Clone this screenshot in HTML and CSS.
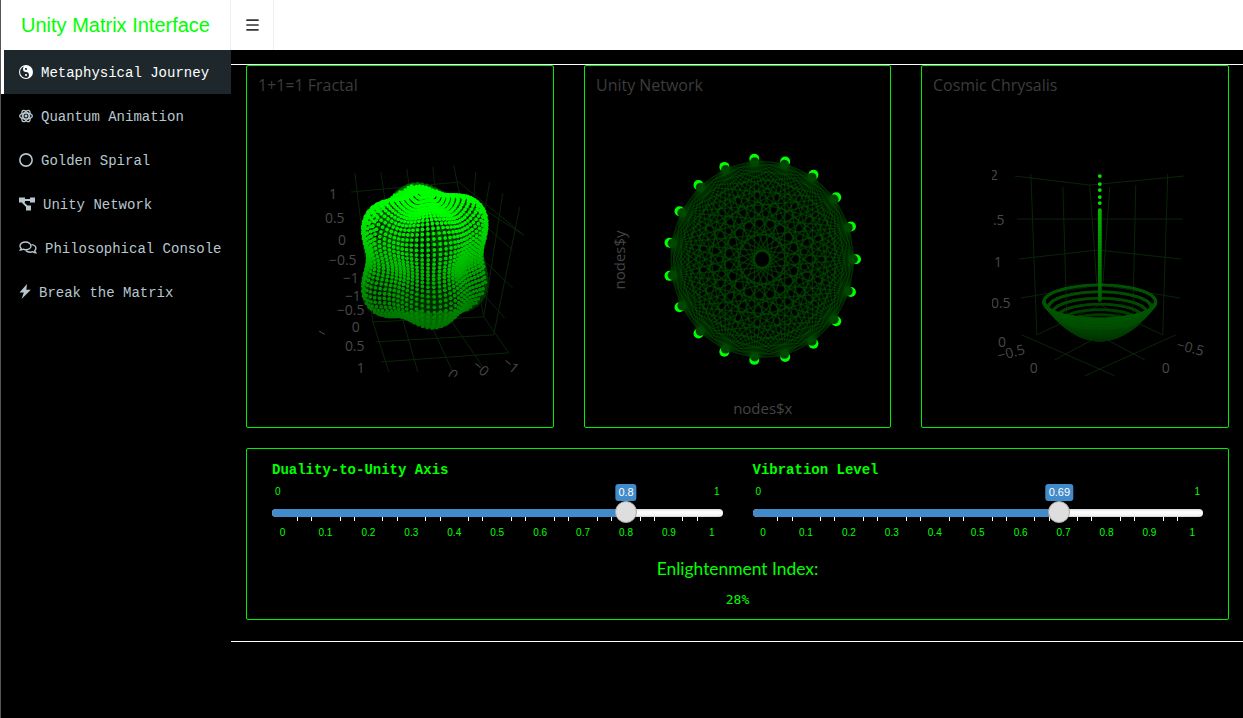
FILE: index.html
```html
<!DOCTYPE html>
<html lang="en">
<head>
<meta charset="utf-8">
<title>Unity Matrix Interface</title>
<link rel="stylesheet" href="styles.css">
</head>
<body>
<header class="topbar">
  <div class="logo">Unity Matrix Interface</div>
  <button class="toggle" aria-label="Toggle navigation">
    <svg width="13" height="12" viewBox="0 0 13 12"><path d="M1 1.2h11M1 6h11M1 10.8h11" class="bars"/></svg>
  </button>
</header>
<div class="layout">
  <nav class="sidebar">
    <a class="item active">
      <svg class="ic w14" viewBox="0 0 16 16"><circle cx="8" cy="8" r="8" fill="#fff"/><path d="M8 1.2A6.8 6.8 0 0 0 8 14.8 3.4 3.4 0 0 0 8 8 3.4 3.4 0 0 1 8 1.2z" fill="#1e282c"/><circle cx="8" cy="4.6" r="1.2" fill="#1e282c"/><circle cx="8" cy="11.4" r="1.2" fill="#fff"/></svg>
      <span>Metaphysical Journey</span>
    </a>
    <a class="item">
      <svg class="ic w14" viewBox="0 0 16 16"><g class="line atom"><ellipse cx="8" cy="8" rx="7.2" ry="3.4"/><ellipse cx="8" cy="8" rx="7.2" ry="3.4" transform="rotate(60 8 8)"/><ellipse cx="8" cy="8" rx="7.2" ry="3.4" transform="rotate(120 8 8)"/></g><circle cx="8" cy="8" r="1.7" class="solid"/></svg>
      <span>Quantum Animation</span>
    </a>
    <a class="item">
      <svg class="ic w14" viewBox="0 0 16 16"><circle cx="8" cy="8" r="7" class="line thick"/></svg>
      <span>Golden Spiral</span>
    </a>
    <a class="item">
      <svg class="ic w16" viewBox="0 0 16 14"><path class="solid" d="M0 0.5h6v5H0zM11 0.5h5v5h-5zM7 8.5h5v5H7z"/><path class="line thick" d="M5 3h7M3.5 5l5 5"/></svg>
      <span>Unity Network</span>
    </a>
    <a class="item">
      <svg class="ic w18" viewBox="0 0 18 14"><g class="line thin"><path d="M6.5 1C3.4 1 1 2.8 1 5c0 1 .5 1.8 1.2 2.5-.3.8-.9 1.4-1 1.6 1 0 2-.4 2.7-.9.8.3 1.7.5 2.6.5 3.1 0 5.5-1.7 5.5-3.7S9.6 1 6.5 1z"/><path d="M12.5 3.6c2.5.3 4.4 1.8 4.4 3.7 0 1-.5 1.8-1.2 2.5.3.9 1 1.7 1.2 2-1 0-2.3-.5-3-1.1-.8.3-1.7.5-2.6.5-1.9 0-3.6-.7-4.5-1.7"/></g></svg>
      <span>Philosophical Console</span>
    </a>
    <a class="item">
      <svg class="ic w13" viewBox="0 0 12 15"><path class="solid" d="M8 0 .5 8.5h4.3L2.6 15 11.8 5.7H7.3z"/></svg>
      <span>Break the Matrix</span>
    </a>
  </nav>
  <main class="main">
    <div class="panel">
      <section class="charts">
        <div class="card chart">
          <svg class="plot" viewBox="247 66 306 361">
            <text x="258" y="91" class="title">1+1=1 Fractal</text>
            <svg x="300" y="150" width="230" height="227" viewBox="300 150 230 227">
              <path class="grid" d="M351 192 459 182 524 235M355 173 373 322M381 172 403 320M407 169 428 318M433 167 449 317M454 165 484 317M476 172 470 250M490 182 478 250M503 193 484 317M520 207 494 335M470 200 524 235M473 215 513 250M473 250 513 288M480 290 505 318M373 322 484 317M376 342 494 335M381 362 509 353M373 322 389 372M403 320 418 372M428 318 453 372M449 317 483 367M484 317 509 353"/>
              <g class="ticks">
                <text x="329" y="199">1</text><text x="325" y="223">0.5</text><text x="338" y="245">0</text><text x="329" y="265">−0.5</text><text x="343" y="283">−1</text><text x="345" y="301">−1</text><text x="337" y="315">−0.5</text><text x="352" y="332">0</text><text x="345" y="351">0.5</text><text x="357" y="373">1</text>
                <text transform="translate(502 364) rotate(40)">−1</text><text transform="translate(472 367) rotate(40)">−0.</text><text transform="translate(447 376) rotate(40)">0</text><text transform="translate(316 335) rotate(30)">−</text>
              </g>
              <g id="fractal"></g>
            </svg>
          </svg>
        </div>
        <div class="card chart">
          <svg class="plot" viewBox="585 66 306 361">
            <text x="596" y="91" class="title">Unity Network</text>
            <g id="network"></g>
            <text x="763" y="414" class="axis" text-anchor="middle">nodes$x</text>
            <text transform="translate(625 260) rotate(-90)" class="axis" text-anchor="middle">nodes$y</text>
          </svg>
        </div>
        <div class="card chart">
          <svg class="plot" viewBox="922 66 306 361">
            <text x="933" y="91" class="title">Cosmic Chrysalis</text>
            <svg x="992" y="160" width="218" height="217" viewBox="992 160 218 217">
              <path class="grid" d="M1015 176 1090 185 1184 176M1017 219H1183M1019 259 1098 250 1181 259M1021 298 1100 285 1180 298M1031 174 1037 335M1063 187 1067 320M1090 185 1097 285M1110 187 1103 285M1136 185 1133 320M1168 174 1163 335M1022 335 1115 376M1085 376 1176 335M1037 335 1100 305M1163 335 1100 305M1055 360 1130 320M1145 360 1070 320"/>
              <g class="ticks">
                <text x="990" y="180">2</text><text x="985" y="225">1.5</text><text x="994" y="267">1</text><text x="991" y="308">0.5</text><text x="998" y="347">0</text>
                <text transform="translate(999 361) rotate(-15)">−0.5</text><text x="1030" y="373">0</text>
                <text transform="translate(1176 349) rotate(15)">−0.5</text><text x="1162" y="373">0</text>
              </g>
              <g id="chrysalis"></g>
            </svg>
          </svg>
        </div>
      </section>
      <section class="card controls">
        <div class="sliders">
          <div class="control">
            <label class="label">Duality-to-Unity Axis</label>
            <div class="irs" style="--v:0.8">
              <span class="irs-min">0</span><span class="irs-max">1</span>
              <span class="irs-line"></span><span class="irs-bar"></span>
              <span class="irs-single">0.8</span><span class="irs-handle"></span>
              <div class="irs-ticks"></div>
              <div class="irs-scale"><span>0</span><span>0.1</span><span>0.2</span><span>0.3</span><span>0.4</span><span>0.5</span><span>0.6</span><span>0.7</span><span>0.8</span><span>0.9</span><span>1</span></div>
            </div>
          </div>
          <div class="control">
            <label class="label">Vibration Level</label>
            <div class="irs" style="--v:0.69">
              <span class="irs-min">0</span><span class="irs-max">1</span>
              <span class="irs-line"></span><span class="irs-bar"></span>
              <span class="irs-single">0.69</span><span class="irs-handle"></span>
              <div class="irs-ticks"></div>
              <div class="irs-scale"><span>0</span><span>0.1</span><span>0.2</span><span>0.3</span><span>0.4</span><span>0.5</span><span>0.6</span><span>0.7</span><span>0.8</span><span>0.9</span><span>1</span></div>
            </div>
          </div>
        </div>
        <h3 class="index-title">Enlightenment Index:</h3>
        <pre class="index-value">28%</pre>
      </section>
    </div>
  </main>
</div>
<script src="charts.js"></script>
</body>
</html>
```
FILE: styles.css
```css
* { box-sizing: border-box; }
html, body { margin: 0; height: 100%; }
body {
  background: #000;
  border-left: 1px solid #555;
  overflow: hidden;
  font-family: "Liberation Sans", Arial, sans-serif;
}
.topbar { display: flex; height: 50px; background: #fff; }
.logo {
  width: 230px;
  border-right: 1px solid #eee;
  color: #0f0;
  font-size: 20px;
  line-height: 50px;
  text-align: center;
}
.toggle {
  width: 43px;
  padding: 0;
  border: 0;
  border-right: 1px solid #eee;
  background: #fff;
  display: flex;
  align-items: center;
  justify-content: center;
}
.bars { fill: none; stroke: #333; stroke-width: 1.7; stroke-linecap: round; }
.layout { display: flex; height: 668px; }
.sidebar { width: 230px; flex: none; background: #000; }
.item {
  display: flex;
  align-items: center;
  gap: 8px;
  height: 44px;
  padding: 2px 0 0 15px;
  border-left: 3px solid transparent;
  color: #b8c7ce;
  font-family: "Liberation Mono", "Courier New", monospace;
  font-size: 14px;
  white-space: nowrap;
}
.item.active { background: #1e282c; border-left-color: #fff; color: #fff; }
.ic { display: block; height: 14px; flex: none; position: relative; top: -1.5px; }
.w13 { width: 12px; height: 15px; }
.w14 { width: 14px; }
.w16 { width: 16px; }
.w18 { width: 18px; }
.solid { fill: #b8c7ce; }
.line { fill: none; stroke: #b8c7ce; stroke-width: 1.2; }
.line.atom { stroke-width: 1.6; }
.line.thick { stroke-width: 1.8; }
.line.thin { stroke-width: 1.4; }
.main { flex: 1; min-width: 0; padding: 14px 0 0; }
.panel {
  padding: 0 14px 21px 15px;
  border-top: 1px solid #fff;
  border-bottom: 1px solid #fff;
}
.card { border: 1px solid #0e0; border-radius: 2px; background: #000; }
.charts { display: grid; grid-template-columns: repeat(3, 1fr); gap: 30px; }
.chart { height: 363px; }
.plot { display: block; width: 100%; height: 100%; }
.title { font: 16px "Open Sans", sans-serif; fill: #3c3c3c; }
.axis { font: 15px "Open Sans", sans-serif; fill: #444; }
.ticks text { font: 14px "Open Sans", sans-serif; fill: #484848; }
.grid { fill: none; stroke: #0a240a; stroke-width: 1; }
.controls { margin-top: 20px; height: 172px; padding: 14px 25px 0; text-align: center; }
.sliders { display: grid; grid-template-columns: 1fr 1fr; gap: 30px; }
.control { min-width: 0; text-align: left; }
.label {
  display: block;
  height: 14px;
  margin-bottom: 7px;
  color: #0f0;
  font: bold 14px/14px "Liberation Mono", "Courier New", monospace;
}
.irs { position: relative; height: 56px; color: #0f0; font-size: 10px; }
.irs-min, .irs-max { position: absolute; top: 2px; line-height: 12px; }
.irs-min { left: 3px; }
.irs-max { right: 3px; }
.irs-line {
  position: absolute;
  top: 25px;
  left: 0;
  right: 0;
  height: 8px;
  border-radius: 8px;
  background: linear-gradient(#dcdcdc, #fff 35%, #f4f4f4 80%, #ccc);
}
.irs-bar {
  position: absolute;
  top: 25px;
  left: 0;
  width: calc(10.5px + var(--v) * (100% - 21px));
  height: 8px;
  border-radius: 8px 0 0 8px;
  background: #428bca;
}
.irs-handle {
  position: absolute;
  top: 17px;
  left: calc(10.5px + var(--v) * (100% - 21px));
  width: 22px;
  height: 22px;
  margin-left: -11px;
  border: 1px solid #ababab;
  border-radius: 50%;
  background: #dedede;
}
.irs-single {
  position: absolute;
  top: 0;
  left: calc(10.5px + var(--v) * (100% - 21px));
  transform: translateX(-50%);
  padding: 2px 3px;
  border-radius: 3px;
  background: #428bca;
  color: #fff;
  font-size: 11px;
  line-height: 13px;
}
.irs-ticks {
  position: absolute;
  top: 33px;
  left: 10.5px;
  right: 10.5px;
  height: 4px;
  display: flex;
  justify-content: space-between;
}
.irs-ticks span { width: 1px; background: #fff; }
.irs-ticks span.major { background: transparent; }
.irs-scale {
  position: absolute;
  top: 43px;
  left: 10.5px;
  right: 10.5px;
  display: flex;
  justify-content: space-between;
  line-height: 12px;
}
.irs-scale span { width: 0; display: flex; justify-content: center; }
.index-title {
  margin: 17px 0 0;
  color: #0f0;
  font: 400 17.4px/24px Lato, sans-serif;
}
.index-value {
  margin: 11px 0 0;
  color: #0f0;
  font: 13px/16px "DejaVu Sans Mono", monospace;
}
```
FILE: charts.js
```js
var NS = "http://www.w3.org/2000/svg";
function dot(g, x, y, r, c) {
  var e = document.createElementNS(NS, "circle");
  e.setAttribute("cx", x.toFixed(1));
  e.setAttribute("cy", y.toFixed(1));
  e.setAttribute("r", r);
  e.setAttribute("fill", c);
  g.appendChild(e);
}
function rgb(r, g, b) { return "rgb(" + Math.round(r) + "," + Math.round(g) + "," + Math.round(b) + ")"; }

/* 1+1=1 fractal: a lobed surface of revolution seen from above */
(function () {
  var g = document.getElementById("fractal"), pts = [];
  var e = 24 * Math.PI / 180, a = 0.35, S = 62;
  for (var i = 0; i < 64; i++) {
    var th = i / 64 * 2 * Math.PI;
    for (var j = 0; j <= 44; j++) {
      var ph = j / 44 * Math.PI;
      var r = 1 - 0.15 * Math.cos(4 * ph) + 0.3 * Math.exp(-Math.pow(ph / 0.3, 2));
      r *= 1 + 0.1 * Math.cos(4 * th + 0.6) * Math.sin(ph);
      var x = r * Math.sin(ph) * Math.cos(th), y = r * Math.sin(ph) * Math.sin(th), z = r * Math.cos(ph);
      var xr = x * Math.cos(a) - y * Math.sin(a), yr = x * Math.sin(a) + y * Math.cos(a);
      var sx = 425 + S * xr, sy = 256 - S * (z * Math.cos(e) + yr * Math.sin(e));
      var depth = yr * Math.cos(e) - z * Math.sin(e);
      pts.push([depth, sx, sy, z]);
    }
  }
  pts.sort(function (p, q) { return q[0] - p[0]; });
  pts.forEach(function (p) {
    var t = Math.max(0, Math.min(1, (p[3] + 1) / 2));
    var k = p[0] > 0.15 ? 0.4 : 1;
    dot(g, p[1], p[2], 1.9, rgb(0, (105 + 150 * t) * k, 0));
  });
})();

/* Unity network: complete graph on 19 nodes */
(function () {
  var g = document.getElementById("network"), n = 19, cx = 762.3, cy = 259.3, rx = 94, ry = 101;
  var P = [];
  for (var i = 0; i < n; i++) {
    var a = i / n * 2 * Math.PI;
    P.push([cx + rx * Math.cos(a), cy - ry * Math.sin(a)]);
  }
  function inner(p, f) { return [cx + (p[0] - cx) * f, cy + (p[1] - cy) * f]; }
  P.forEach(function (p) {
    dot(g, p[0], p[1], 5, "#00ff00");
    var d = inner(p, 0.97);
    dot(g, d[0], d[1], 4.6, "#063f06");
  });
  for (var u = 0; u < n; u++) {
    for (var v = u + 1; v < n; v++) {
      var s = inner(P[u], 0.98), t = inner(P[v], 0.98);
      var l = document.createElementNS(NS, "line");
      l.setAttribute("x1", s[0]); l.setAttribute("y1", s[1]);
      l.setAttribute("x2", t[0]); l.setAttribute("y2", t[1]);
      l.setAttribute("stroke", "rgba(0,75,0,0.6)");
      l.setAttribute("stroke-width", "1.5");
      g.appendChild(l);
    }
  }
})();

/* Cosmic chrysalis: bowl with a central spike */
(function () {
  var g = document.getElementById("chrysalis"), pts = [];
  function ring(u, from, to, shade, r) {
    var n = Math.max(12, Math.round(110 * u));
    for (var j = 0; j < n; j++) {
      var v = from + j / n * (to - from);
      pts.push([Math.sin(v), 1100 + 56 * u * Math.cos(v), 338 - 36 * u * u + 17 * u * Math.sin(v), shade, r]);
    }
  }
  var u;
  for (u = 0.12; u <= 1.001; u += 0.08) ring(u, Math.PI, 2 * Math.PI, 20 + 65 * u, 1.5);
  for (u = 0.04; u <= 0.75; u += 0.028) ring(u, 0, Math.PI, 36 + 42 * u, 1.7);
  [0.8, 0.86, 0.92, 0.97, 1].forEach(function (w) { ring(w, 0, Math.PI, 40 + 45 * w, 1.6); });
  pts.sort(function (p, q) { return p[0] - q[0]; });
  pts.forEach(function (p) { dot(g, p[1], p[2], p[4], rgb(0, p[3], 0)); });
  for (var y = 300; y >= 209; y -= 1.5) {
    dot(g, 1100, y, 1.9, rgb(0, 90 + 95 * (300 - y) / 91, 0));
  }
  [203, 197, 190, 184, 176].forEach(function (y) { dot(g, 1100, y, 1.9, "#00e800"); });
})();

/* Slider ticks: 31 positions, those on a labelled value are blank */
document.querySelectorAll(".irs-ticks").forEach(function (box) {
  for (var i = 0; i <= 30; i++) {
    var s = document.createElement("span");
    if (i % 3 === 0) s.className = "major";
    box.appendChild(s);
  }
});
```
